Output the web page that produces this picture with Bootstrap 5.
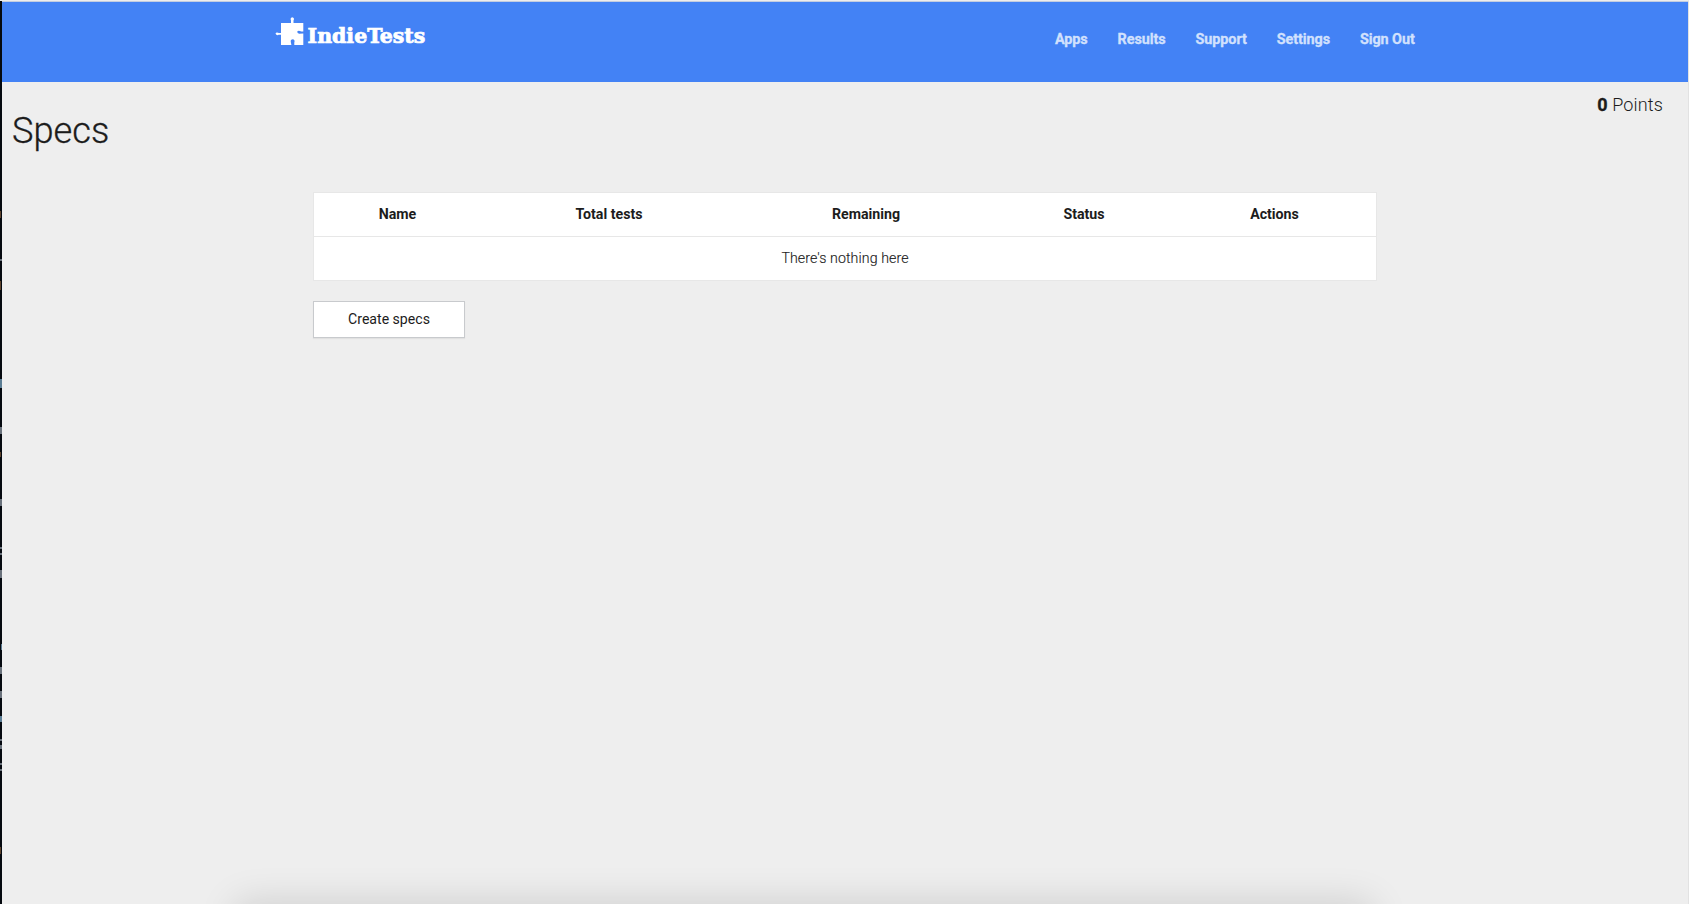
<!DOCTYPE html>
<html lang="en">
<head>
<meta charset="utf-8">
<meta name="viewport" content="width=device-width, initial-scale=1">
<title>Specs - IndieTests</title>
<link href="https://cdn.jsdelivr.net/npm/bootstrap@5.3.0/dist/css/bootstrap.min.css" rel="stylesheet">
<style>
body{font-family:Roboto,sans-serif;font-weight:300;color:#1c1c1c;background:#eee;height:100vh;padding-left:2px;border-top:1px solid #ededed;border-right:1px solid #e2e2e2;overflow:hidden;position:relative}
.topbar{background:#4382f5;height:81px;border-top:1px solid #c3cde0}
.brand-mark{margin-left:273px;margin-top:14px;width:154px;height:32px;display:block}
.brand-mark text{font:bold 21px "DejaVu Serif Condensed","DejaVu Serif",serif}
.menu-link{font-size:14.4px;line-height:20px;font-weight:700;letter-spacing:-.08px;color:#d2e1fd;-webkit-text-stroke:.3px #d2e1fd;text-decoration:none;white-space:nowrap}
.menu{margin-right:273.3px;margin-top:28px;gap:30px}
.points{font-size:18px;line-height:24px;margin:11px 25px 0 0;letter-spacing:.15px}
.points b{font-weight:700;-webkit-text-stroke:.3px #1c1c1c}
.page-title{font-size:36.2px;line-height:44px;font-weight:300;margin:-8px 0 0 10px;-webkit-text-stroke:.3px #1c1c1c}
.main-col{width:1064px;margin-left:311px;margin-top:39px}
.specs{--bs-table-bg:#fff;font-size:14.2px;border:1px solid #e7e7e7;table-layout:fixed;width:1064px;border-collapse:separate;border-spacing:0}
.specs th,.specs td{height:44px;padding:0 0 2px;line-height:20px;vertical-align:middle;text-align:center;color:#1c1c1c;border:0}
.specs td{height:43px;letter-spacing:.08px;-webkit-text-stroke:.15px #1c1c1c}
.specs th{font-weight:700;border-bottom:1px solid #e7e7e7}
.btn-create{width:152px;height:37px;padding:0;font-size:14.1px;background:#fff;border:1px solid #c8cacd;border-radius:0;color:#1c1c1c;box-shadow:0 1px 1px #0000000d;margin-top:20px}
.shade-clip{position:absolute;left:180px;right:250px;bottom:0;height:70px;overflow:hidden;pointer-events:none}
.dock-shade{position:absolute;left:58px;right:68px;top:71px;height:60px;box-shadow:0 0 38px 2px rgba(0,0,0,.14)}
.edge{position:absolute;left:0;top:-1px;width:2px;height:904px;background:#05090f}
</style>
</head>
<body>
<header class="topbar d-flex justify-content-between align-items-start">
  <a href="#" aria-label="IndieTests">
    <svg class="brand-mark" viewBox="0 0 154 32" fill="#fff">
      <path d="M6 7H16V4.5Q14.8 2 17.2 1.3Q20 2 18.5 4.5V7H28.3V15.5H26.3Q23.7 14.3 22.3 15.2Q22 17.3 24.2 17.8L28.3 17.6V29H19.3V26.5Q20.3 24 18 23.3Q15.2 23.4 15.8 26L16.4 29H6V18.8H3.7Q1.8 20 .5 17.8Q1.2 15.5 4 17H6Z"/>
      <text x="32.6" y="26.7" textLength="117.7" lengthAdjust="spacingAndGlyphs" stroke="#fff" stroke-width=".7">IndieTests</text>
    </svg>
  </a>
  <nav class="menu d-flex">
    <a class="menu-link" href="#">Apps</a>
    <a class="menu-link" href="#">Results</a>
    <a class="menu-link" href="#">Support</a>
    <a class="menu-link" href="#">Settings</a>
    <a class="menu-link" href="#">Sign Out</a>
  </nav>
</header>
<main>
  <div class="points text-end"><b>0</b> Points</div>
  <h1 class="page-title">Specs</h1>
  <div class="main-col">
    <table class="table specs mb-0">
      <colgroup><col style="width:167px"><col style="width:256px"><col style="width:258px"><col style="width:178px"><col></colgroup>
      <thead><tr><th>Name</th><th>Total tests</th><th>Remaining</th><th>Status</th><th>Actions</th></tr></thead>
      <tbody><tr><td colspan="5">There's nothing here</td></tr></tbody>
    </table>
    <button class="btn btn-create" type="button">Create specs</button>
  </div>
</main>
<div class="shade-clip"><div class="dock-shade"></div></div>
<svg class="edge" viewBox="0 0 2 904" preserveAspectRatio="none" aria-hidden="true">
  <path fill="#5e432c" d="M0 211h1v7h-1zM0 281h1v9h-1zM0 452h1v5h-1zM0 847h1v7h-1z"/>
  <path fill="#5b7d94" d="M0 379h2v9h-2zM1 644h1v6h-1zM0 716h2v6h-2z"/>
  <path fill="#69717b" d="M0 259h2v2h-2zM0 427h2v7h-2zM0 499h2v7h-2zM0 547h2v2h-2zM0 553h2v2h-2zM0 570h2v8h-2zM0 667h2v7h-2zM0 691h2v7h-2zM0 739h2v2h-2zM0 745h2v4h-2zM0 763h2v2h-2zM0 769h2v2h-2z"/>
</svg>
<script src="https://cdn.jsdelivr.net/npm/bootstrap@5.3.0/dist/js/bootstrap.bundle.min.js"></script>
</body>
</html>
